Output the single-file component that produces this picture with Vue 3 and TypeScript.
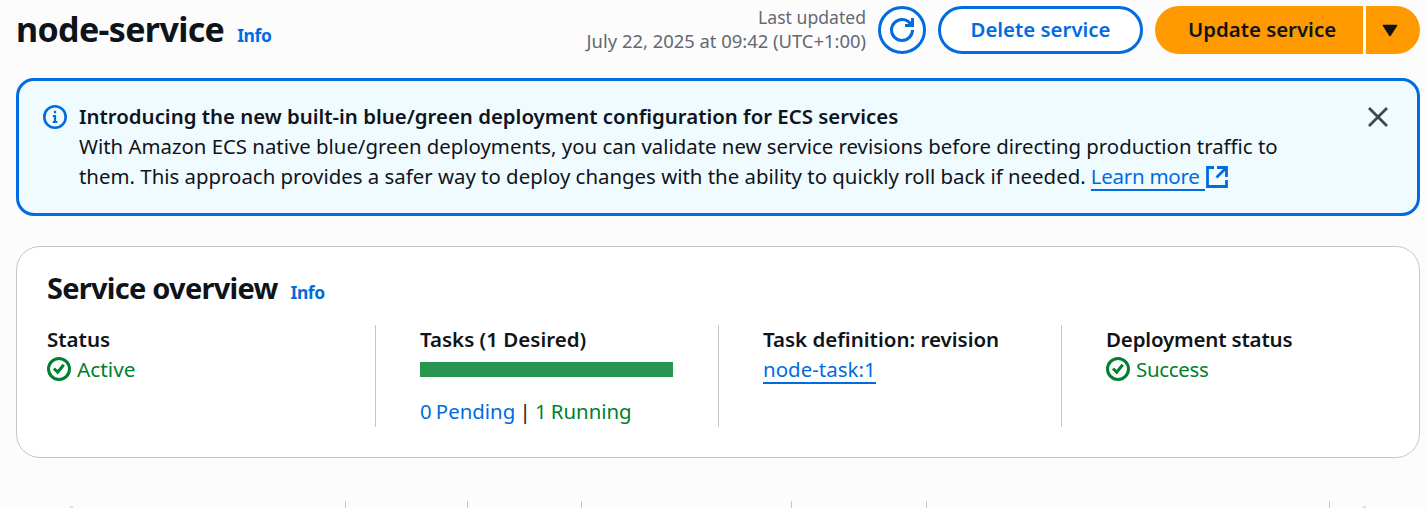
<script setup lang="ts">
interface TabSegment {
  id: string
  width: number
}

const segments: TabSegment[] = [
  { id: 'logs', width: 122 },
  { id: 'tasks', width: 114 },
  { id: 'deployments', width: 210 },
  { id: 'events', width: 135 },
  { id: 'configuration', width: 403 },
]
</script>

<template>
  <main class="page">
    <header class="header">
      <div class="title-group">
        <h1 class="title">node-service</h1>
        <a class="info">Info</a>
      </div>
      <div class="updated">
        <div class="updated-label">Last updated</div>
        <div class="updated-time">July 22, 2025 at 09:42 (UTC+1:00)</div>
      </div>
      <button class="btn refresh" aria-label="Refresh">
        <svg width="24" height="24" viewBox="0 0 16 16" fill="none" stroke="currentColor" stroke-width="2">
          <path d="M15 8c0 3.870-3.130 7-7 7s-7-3.130-7-7 3.130-7 7-7c2.790 0 5.200 1.630 6.330 4" />
          <path d="M10 5h5V0" />
        </svg>
      </button>
      <button class="btn delete"><span class="btn-text">Delete service</span></button>
      <div class="split">
        <button class="btn update"><span class="btn-text">Update service</span></button>
        <button class="btn caret" aria-label="More actions">
          <svg width="16" height="13" viewBox="0 0 16 13">
            <path d="M1.500 1.500h13L8 11.500z" fill="currentColor" stroke="currentColor" stroke-width="1.500" stroke-linejoin="round" />
          </svg>
        </button>
      </div>
    </header>

    <section class="alert">
      <svg class="alert-icon" width="24" height="24" viewBox="0 0 24 24" fill="none" stroke="currentColor">
        <circle cx="12" cy="12" r="10.700" stroke-width="2.600" />
        <path d="M12 5.800v2.400M9.800 11H12v6.500M9.800 17h4.600" stroke-width="2.200" />
      </svg>
      <div class="alert-body">
        <div><strong class="alert-title">Introducing the new built-in blue/green deployment configuration for ECS services</strong></div>
        <div><span class="line-one">With Amazon ECS native blue/green deployments, you can validate new service revisions before directing production traffic to</span></div>
        <div class="alert-last">
          <span class="line-two">them. This approach provides a safer way to deploy changes with the ability to quickly roll back if needed.</span>
          <a class="link learn">Learn more</a>
          <svg class="external" width="22" height="22" viewBox="0 0 22 22" fill="none" stroke="currentColor" stroke-width="2.800">
            <path d="M8 1.500H1.500v19h19V14" />
            <path d="M11 1.500h9.500V11M20 2L10.500 11.500" />
          </svg>
        </div>
      </div>
      <svg class="close" width="22" height="22" viewBox="0 0 22 22" fill="none" stroke="currentColor" stroke-width="2.800">
        <path d="M2 2l18 18M20 2L2 20" />
      </svg>
    </section>

    <section class="panel">
      <div class="panel-head">
        <h2 class="panel-title">Service overview</h2>
        <a class="info">Info</a>
      </div>
      <div class="columns">
        <div class="column">
          <div class="label">Status</div>
          <div class="status">
            <svg width="24" height="24" viewBox="0 0 24 24" fill="none" stroke="currentColor" stroke-width="3">
              <circle cx="12" cy="12" r="10.500" />
              <path d="M7 11.500l3.700 3.700 6-7.500" />
            </svg>
            <span class="active-text">Active</span>
          </div>
        </div>
        <div class="column">
          <div class="label">Tasks (1 Desired)</div>
          <div class="bar"></div>
          <div class="counts"><span class="pending">0 Pending</span> <span class="pipe">|</span> <span class="running">1 Running</span></div>
        </div>
        <div class="column">
          <div class="label">Task definition: revision</div>
          <div><a class="link task">node-task:1</a></div>
        </div>
        <div class="column">
          <div class="label deployment-label">Deployment status</div>
          <div class="status">
            <svg width="24" height="24" viewBox="0 0 24 24" fill="none" stroke="currentColor" stroke-width="3">
              <circle cx="12" cy="12" r="10.500" />
              <path d="M7 11.500l3.700 3.700 6-7.500" />
            </svg>
            <span class="success-text">Success</span>
          </div>
        </div>
      </div>
    </section>

    <nav class="tabs">
      <span class="scroll-tip"></span>
      <span v-for="segment in segments" :key="segment.id" class="segment" :style="{ width: segment.width + 'px' }"></span>
      <span class="segment last"><span class="scroll-tip end"></span></span>
    </nav>
  </main>
</template>

<style>
body {
  margin: 0;
  background: #fcfcfd;
}
</style>

<style scoped>
.page {
  box-sizing: border-box;
  width: 1427px;
  height: 508px;
  padding: 6px 7px 0 16px;
  overflow: hidden;
  background: #fcfcfd;
  color: #0f141a;
  font: 20.500px/30px "Noto Sans", sans-serif;
  white-space: nowrap;
}
.header {
  display: flex;
  height: 48px;
}
.title-group,
.panel-head {
  display: flex;
  align-items: baseline;
}
.title-group {
  flex: 1;
}
.title {
  margin: 0 13px 0 0;
  font-size: 34px;
  line-height: 46px;
  font-weight: 700;
  letter-spacing: -0.650px;
}
.info {
  color: #006ce0;
  font-size: 17.500px;
  font-weight: 700;
  letter-spacing: -0.400px;
}
.updated {
  margin: -1px 12px 0 0;
  color: #656871;
  font-size: 18px;
  line-height: 24px;
  text-align: right;
}
.updated-label {
  font-size: 17.600px;
}
.updated-time {
  font-size: 18.400px;
}
.btn {
  display: flex;
  align-items: center;
  justify-content: center;
  box-sizing: border-box;
  height: 48px;
  margin: 0;
  padding: 0;
  border: 3px solid #006ce0;
  border-radius: 24px;
  background: #fff;
  color: #006ce0;
  font: 600 20.400px/30px "Noto Sans", sans-serif;
}
.btn-text {
  padding-bottom: 2px;
}
.refresh {
  width: 48px;
  margin-right: 12px;
}
.delete {
  width: 205px;
  margin-right: 12px;
}
.split {
  display: flex;
  gap: 3px;
}
.update,
.caret {
  border: 0;
  background: #ff9900;
  color: #0f141a;
}
.update {
  width: 208px;
  padding-left: 6px;
  border-radius: 24px 0 0 24px;
}
.caret {
  width: 54px;
  padding-right: 6px;
  border-radius: 0 24px 24px 0;
}
.alert {
  display: flex;
  box-sizing: border-box;
  height: 138px;
  margin-top: 24px;
  padding: 20px 28px 0 24px;
  border: 3px solid #006ce0;
  border-radius: 18px;
  background: #f0fbff;
}
.alert-icon {
  flex: none;
  margin: 4px 12px 0 0;
  color: #006ce0;
}
.alert-body {
  flex: 1;
  min-width: 0;
}
.alert-title {
  font-size: 20.400px;
  font-weight: 600;
}
.line-one {
  font-size: 20.370px;
}
.alert-last {
  display: flex;
}
.line-two {
  font-size: 20.400px;
}
.link {
  display: inline-block;
  box-sizing: border-box;
  height: 30px;
  border-bottom: 2px solid #006ce0;
  color: #006ce0;
}
.learn {
  width: 114px;
  margin-left: 5px;
  letter-spacing: -0.250px;
}
.external {
  margin: 5px 0 0 1px;
  color: #006ce0;
}
.close {
  flex: none;
  margin-top: 5px;
  color: #424650;
}
.panel {
  box-sizing: border-box;
  height: 212px;
  margin-top: 30px;
  padding: 20px 15px 0 30px;
  border: 1px solid #c6c6cd;
  border-radius: 24px;
  background: #fff;
}
.panel-title {
  margin: 0 13px 0 0;
  font-size: 29px;
  line-height: 42px;
  font-weight: 700;
  letter-spacing: -0.750px;
}
.columns {
  display: grid;
  grid-template-columns: 328px repeat(3, 343px);
  height: 102px;
  margin-top: 16px;
}
.column + .column {
  padding-left: 44px;
  border-left: 1px solid #c6c6cd;
}
.label {
  margin-top: -1px;
  font-weight: 600;
}
.deployment-label {
  letter-spacing: -0.180px;
}
.status {
  display: flex;
  align-items: center;
  gap: 6px;
  color: #00802f;
}
.active-text {
  font-size: 20.800px;
}
.success-text {
  letter-spacing: -0.350px;
}
.bar {
  width: 253px;
  height: 15px;
  margin: 8px 0 19px;
  background: #279450;
}
.counts {
  font-size: 20.400px;
  word-spacing: -1.100px;
}
.pending {
  color: #006ce0;
}
.running {
  color: #00802f;
}
.tabs {
  display: flex;
  height: 7px;
  margin-top: 43px;
}
.scroll-tip {
  box-sizing: border-box;
  width: 329px;
  height: 2px;
  margin-top: 5px;
}
.scroll-tip::before {
  content: "";
  display: block;
  width: 3px;
  height: 2px;
  margin-left: 54px;
  background: #dedee3;
}
.segment {
  box-sizing: border-box;
  height: 7px;
  border-left: 1px solid #c6c6cd;
}
.last {
  display: flex;
}
.end {
  width: 60px;
}
.end::before {
  margin-left: 33px;
}
</style>
